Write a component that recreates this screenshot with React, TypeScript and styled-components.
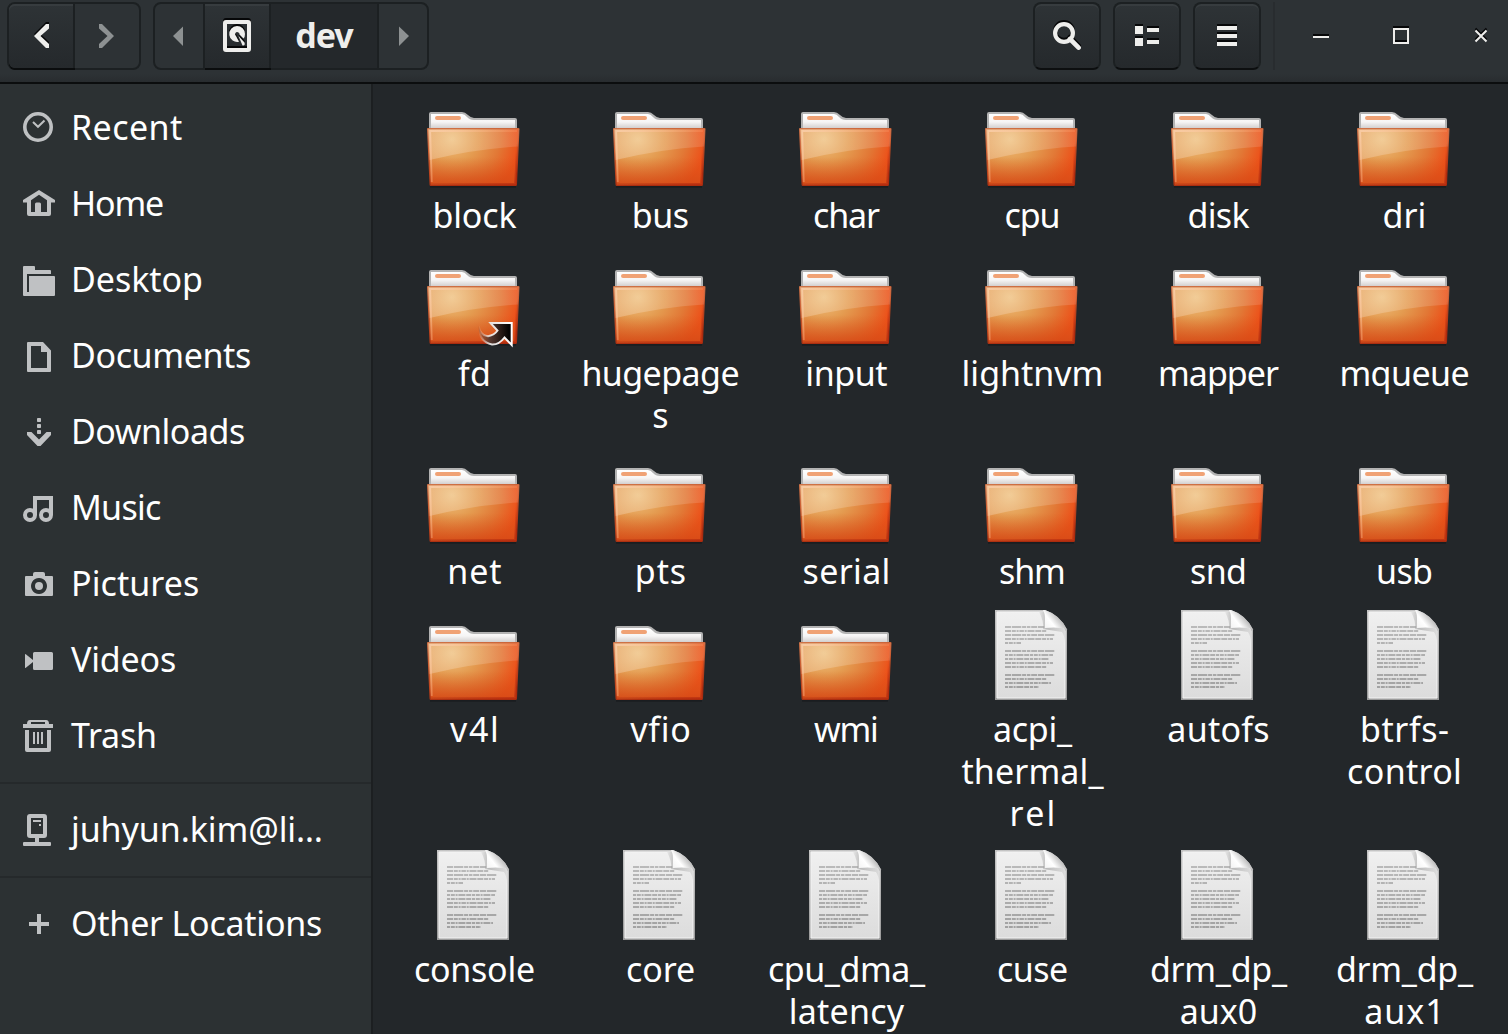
import React, { useLayoutEffect, useRef, useState } from "react";
import styled, { createGlobalStyle, css } from "styled-components";

const GlobalStyle = createGlobalStyle`
  *, *::before, *::after { box-sizing: border-box; }
  body {
    margin: 0;
    overflow: hidden;
    background: #23272a;
    font-family: "Noto Sans", "Open Sans", sans-serif;
  }
`;

const Window = styled.div`
  display: flex;
  flex-direction: column;
  width: 1508px;
  height: 1034px;
  overflow: hidden;
  color: #fff;
`;

/* ---------- header bar ---------- */

const HeaderBar = styled.header`
  display: flex;
  align-items: flex-start;
  flex: none;
  height: 84px;
  padding: 2px 3px 0 7px;
  border-bottom: 2px solid #0b0d0e;
  background: linear-gradient(#2d3235 0, #2d3235 74px, #282c2f 82px);
`;

const ButtonGroup = styled.div`
  display: flex;
  height: 68px;
  margin-right: 12px;
  border: 2px solid #1c2022;
  border-radius: 8px;
  background: #2d3235;
`;

const raised = css`
  background: linear-gradient(#2e3336, #25292c);
  box-shadow: inset 0 2px 0 #373c3f, 0 2px 0 #0b0d0e;
`;

const Segment = styled.button<{ $width: number; $raised?: boolean; $current?: boolean }>`
  display: flex;
  align-items: center;
  justify-content: center;
  box-sizing: content-box;
  width: ${(p) => p.$width}px;
  height: 64px;
  padding: 0;
  border: 0;
  border-right: 2px solid #1c2022;
  background: ${(p) => (p.$current ? "#24282b" : "transparent")};
  color: #eeeeec;
  font: bold 34px "Noto Sans", "Open Sans", sans-serif;
  ${(p) => p.$raised && raised}
  &:first-child { border-radius: 6px 0 0 6px; }
  &:last-child { border-right: 0; border-radius: 0 6px 6px 0; }
`;

const ToolButton = styled.button`
  display: flex;
  align-items: center;
  justify-content: center;
  width: 68px;
  height: 68px;
  margin-right: 12px;
  padding: 0;
  border: 2px solid #1c2022;
  border-bottom-color: #0d0f10;
  border-radius: 8px;
  background: linear-gradient(#2e3336, #25292c) padding-box;
  box-shadow: inset 0 2px 0 #373c3f;
`;

const Spacer = styled.div`
  flex: 1;
`;

const Divider = styled.div`
  width: 2px;
  height: 68px;
  background: #282c2f;
`;

const WindowControls = styled.div`
  display: flex;
  gap: 32px;
  margin-left: 22px;
`;

const ControlButton = styled.button`
  display: flex;
  align-items: center;
  justify-content: center;
  width: 48px;
  height: 68px;
  padding: 0;
  border: 0;
  background: none;
`;

const Glyph = styled.svg<{ $embossed?: boolean; $size?: number }>`
  display: block;
  flex: none;
  width: ${(p) => p.$size ?? 32}px;
  height: ${(p) => p.$size ?? 32}px;
  overflow: visible;
  color: ${(p) => (p.$embossed ? "#eeeeec" : "#8d9192")};
  fill: currentColor;
  ${(p) => p.$embossed && "filter: drop-shadow(0 -2px 0 #060708);"}
`;

/* ---------- body ---------- */

const Body = styled.div`
  display: flex;
  flex: 1;
  min-height: 0;
`;

const Sidebar = styled.nav`
  flex: none;
  width: 373px;
  padding-top: 6px;
  border-right: 2px solid #1c1f21;
  background: #2c3133;
`;

const Place = styled.a`
  display: flex;
  align-items: center;
  height: 76px;
  padding-left: 23px;
`;

const PlaceIcon = styled.svg`
  display: block;
  flex: none;
  width: 32px;
  height: 32px;
  margin-right: 16px;
  fill: #bfc1c3;
`;

const Rule = styled.hr`
  height: 2px;
  margin: 8px 0;
  border: 0;
  background: #25292b;
`;

const Text = styled.span<{ $bold?: boolean }>`
  display: block;
  white-space: pre;
  font-size: 34px;
  font-weight: ${(p) => (p.$bold ? 700 : 400)};
  line-height: 42px;
  ${Place} & { margin-bottom: 2px; }
  ${Segment} & { padding: 0 0 2px 1px; }
`;

const Files = styled.main`
  display: grid;
  flex: 1;
  grid-template-columns: repeat(6, 186px);
  grid-template-rows: 158px 198px 158px 240px 240px;
  padding: 8px 0 0 7px;
  overflow: hidden;
  background: #23272a;
`;

const Entry = styled.div`
  display: flex;
  flex-direction: column;
  align-items: center;
`;

const EntryIcon = styled.svg`
  display: block;
  flex: none;
  width: 96px;
  height: 96px;
  overflow: visible;
`;

const EntryName = styled.div`
  display: flex;
  flex-direction: column;
  align-items: center;
  padding: 6px 0 0 3px;
`;

/* A line of text whose tracking is adjusted so that its ink spans `width`. */
function Tracked({ text, width, bold }: { text: string; width: number; bold?: boolean }) {
  const ref = useRef<HTMLSpanElement>(null);
  const [spacing, setSpacing] = useState(0);
  useLayoutEffect(() => {
    const ctx = document.createElement("canvas").getContext("2d");
    if (!ctx || !ref.current || text.length < 2) return;
    const s = getComputedStyle(ref.current);
    ctx.font = `${s.fontWeight} ${s.fontSize} ${s.fontFamily}`;
    const m = ctx.measureText(text);
    const ink = m.actualBoundingBoxLeft + m.actualBoundingBoxRight;
    setSpacing((width - ink) / (text.length - 1));
  }, [text, width]);
  return (
    <Text ref={ref} $bold={bold} style={{ letterSpacing: spacing, marginRight: -spacing }}>
      {text}
    </Text>
  );
}

/* ---------- artwork ---------- */

const Sprite = styled.svg`
  position: absolute;
  width: 0;
  height: 0;
`;

function Defs() {
  return (
    <Sprite aria-hidden>
      <symbol id="folder" viewBox="0 0 96 96" overflow="visible">
        <path d="M5 94.800H91" stroke="#121517" strokeWidth="2" opacity=".5" />
        <path d="M4 38V22q0-2 2-2H37q3 0 6 3t6 3H90q2 0 2 2V38Z" fill="#b3b3b3" />
        <path d="M6 38V22H37q2.500 0 5 3t7 3H90V38Z" fill="url(#paper)" />
        <rect x="10" y="24" width="26" height="4" rx="2" fill="#f0a275" />
        <path d="M3 36H93.500q1 0 1 1L92 92.500q0 1.500-1.500 1.500H6q-1.500 0-1.500-1.500L2 37q0-1 1-1Z" fill="url(#border)" />
        <path d="M3.500 37.500H93L90.500 92.500H6L3.500 37.500Z" fill="url(#front)" />
        <path d="M3.500 37.500H93L90.500 92.500H6L3.500 37.500Z" fill="url(#lower)" />
        <path d="M3 37H93.800L93 54.500Q50 57 4.600 68Z" fill="url(#gloss)" />
        <path d="M6.800 90L5.200 39H92" fill="none" stroke="url(#rim)" strokeWidth="1.800" />
        <path d="M90.300 91L92 52" stroke="url(#side)" strokeWidth="2" />
        <path d="M6 92.300H91" stroke="url(#base)" strokeWidth="2" />
      </symbol>
      <symbol id="file" viewBox="0 -2 96 96" overflow="visible">
        <path d="M12 2H62Q77 7 84 21.500V92H12Z" fill="url(#edge)" />
        <path d="M14 4H62Q75 9 82 23V90H14Z" fill="url(#sheet)" stroke="#f4f4f4" strokeWidth="1" />
        <g stroke="url(#ink)" strokeWidth="2" fill="none">
          <path d="M22 19.010L62 19M22 27.010L72 27M22 43.010L72 43M22 67.010L72 67" strokeDasharray="6 .8 9.500 .8 4 .8 3.500 .8 6 .8" />
          <path d="M22 23.010L64 23M22 31.010L70 31M22 55.010L70 55M22 59.010L64 59M22 71.010L64 71" strokeDasharray="6 .8 4 .8 2 .8 4.500 .8 2 .8 7 .8" />
          <path d="M22 35.010L38 35M22 47.010L70 47M22 51.010L66 51M22 75.010L68 75M22 79.010L56 79" strokeDasharray="3 .8 4 .8 2 .8 7 .8 5 .8" />
        </g>
        <path d="M56 4Q61 13 60 21L79 24Q82 28 82 36V22L62 4Z" fill="url(#foldShade)" />
        <path d="M62 20V11Q62 5 60 2H62Q77 7 84 21.500Q76 18.500 62 20Z" fill="url(#fold)" />
      </symbol>
      <linearGradient id="paper" x1="0" y1="0" x2="0" y2="1">
        <stop offset="0" stopColor="#fff" />
        <stop offset=".5" stopColor="#f6f5f5" />
        <stop offset="1" stopColor="#c8c4c3" />
      </linearGradient>
      <linearGradient id="border" x1="0" y1="0" x2=".3" y2="1">
        <stop offset="0" stopColor="#cf7448" />
        <stop offset=".5" stopColor="#c9562a" />
        <stop offset="1" stopColor="#a92c0e" />
      </linearGradient>
      <radialGradient id="front" gradientUnits="userSpaceOnUse" cx="27" cy="47" r="74" gradientTransform="translate(0 4) scale(1 .92)">
        <stop offset="0" stopColor="#eebf7c" />
        <stop offset=".35" stopColor="#e49b50" />
        <stop offset=".65" stopColor="#e27735" />
        <stop offset=".92" stopColor="#ed4f18" />
      </radialGradient>
      <linearGradient id="lower" x1="0" y1="0" x2="0" y2="1">
        <stop offset=".5" stopColor="#d85a1c" stopOpacity="0" />
        <stop offset="1" stopColor="#d54b17" stopOpacity=".85" />
      </linearGradient>
      <linearGradient id="gloss" x1="0" y1="0" x2="1" y2="0">
        <stop offset="0" stopColor="#fff" stopOpacity=".24" />
        <stop offset="1" stopColor="#fff" stopOpacity=".12" />
      </linearGradient>
      <linearGradient id="rim" gradientUnits="userSpaceOnUse" x1="5" y1="39" x2="60" y2="95">
        <stop offset="0" stopColor="#ffd6b8" stopOpacity=".65" />
        <stop offset="1" stopColor="#ff9c62" stopOpacity=".1" />
      </linearGradient>
      <linearGradient id="side" gradientUnits="userSpaceOnUse" x1="0" y1="50" x2="0" y2="92">
        <stop offset="0" stopColor="#c23112" stopOpacity="0" />
        <stop offset="1" stopColor="#b22a0f" stopOpacity=".8" />
      </linearGradient>
      <linearGradient id="base" gradientUnits="userSpaceOnUse" x1="6" y1="0" x2="91" y2="0">
        <stop offset="0" stopColor="#b22f10" stopOpacity=".35" />
        <stop offset="1" stopColor="#b22a0f" stopOpacity=".85" />
      </linearGradient>
      <linearGradient id="edge" x1="0" y1="0" x2="0" y2="1">
        <stop offset="0" stopColor="#c4c4c4" />
        <stop offset="1" stopColor="#9b9b9b" />
      </linearGradient>
      <linearGradient id="sheet" x1="0" y1="0" x2="0" y2="1">
        <stop offset="0" stopColor="#f0f0f0" />
        <stop offset="1" stopColor="#dcdcdc" />
      </linearGradient>
      <linearGradient id="ink" gradientUnits="userSpaceOnUse" x1="0" y1="18" x2="0" y2="80">
        <stop offset="0" stopColor="#bababa" />
        <stop offset="1" stopColor="#a2a2a2" />
      </linearGradient>
      <linearGradient id="fold" gradientUnits="userSpaceOnUse" x1="62" y1="19" x2="76" y2="8">
        <stop offset="0" stopColor="#f4f4f4" />
        <stop offset=".45" stopColor="#fff" />
        <stop offset="1" stopColor="#b4b4b4" />
      </linearGradient>
      <linearGradient id="foldShade" x1="0" y1="0" x2="1" y2="0">
        <stop offset="0" stopColor="#999" stopOpacity=".1" />
        <stop offset=".3" stopColor="#999" stopOpacity=".6" />
        <stop offset="1" stopColor="#bbb" stopOpacity=".35" />
      </linearGradient>
      <linearGradient id="arrow" x1="0" y1="0" x2="1" y2="0">
        <stop offset="0" stopColor="#7a4a38" stopOpacity=".3" />
        <stop offset=".35" stopColor="#55382f" />
        <stop offset=".9" stopColor="#060404" />
      </linearGradient>
      <linearGradient id="arrowLine" x1="0" y1="0" x2="1" y2="0">
        <stop offset="0" stopColor="#fff" stopOpacity="0" />
        <stop offset=".35" stopColor="#eee" stopOpacity=".9" />
        <stop offset="1" stopColor="#fff" />
      </linearGradient>
    </Sprite>
  );
}

function LinkEmblem() {
  return (
    <path
      d="M53.500 76Q55.500 85.500 63 86.300Q69.500 85 72.500 80.500L65.500 73H86.700V95L79.500 87.500Q74 94.800 67 94.500Q54 92 53.500 76Z"
      fill="url(#arrow)"
      stroke="url(#arrowLine)"
      strokeWidth="2"
    />
  );
}

const placeArt: Record<string, React.ReactNode> = {
  recent: (
    <g fill="none" stroke="#bfc1c3">
      <circle cx="15" cy="15" r="13.200" strokeWidth="3.600" />
      <path d="M10 10L15 14.800L21.500 8.500" strokeWidth="2" />
    </g>
  ),
  home: (
    <path
      fillRule="evenodd"
      d="M16 2L32 12V14.500H28V26q0 2-2 2H6q-2 0-2-2V14.500H0V12ZM16 6.800L8 12.200V24H12V16q0-1.500 1.500-1.500h3q1.500 0 1.500 1.500V24H24V12.200Z"
    />
  ),
  desktop: <path d="M1 2H11q1 0 1 1V6H27q1 0 1 1V10H4V28H6V12H31q1 0 1 1V31q0 1-1 1H1q-1 0-1-1V3q0-1 1-1Z" />,
  documents: <path fillRule="evenodd" d="M5 2H20L28 10.500V31q0 1-1 1H5q-1 0-1-1V3q0-1 1-1ZM8 6V28H24V12H18V6Z" />,
  downloads: (
    <>
      <path d="M4 16H8.500L16 23.500L23.500 16H28V19L17.500 30H14.500L4 19Z" />
      <rect x="14" y="2" width="4" height="4" rx=".8" />
      <rect x="14" y="8" width="4" height="4" rx=".8" />
      <rect x="14" y="14" width="4" height="4" rx=".8" />
    </>
  ),
  music: (
    <>
      <path d="M10 4H30V23H26V8H14V23H10Z" />
      <circle cx="7" cy="23" r="5" fill="none" stroke="#bfc1c3" strokeWidth="4" />
      <circle cx="23" cy="23" r="5" fill="none" stroke="#bfc1c3" strokeWidth="4" />
    </>
  ),
  pictures: (
    <>
      <path
        fillRule="evenodd"
        d="M10 8V6q0-2 2-2h8q2 0 2 2V8h7q1 0 1 1V27q0 1-1 1H3q-1 0-1-1V9q0-1 1-1ZM16 10a8 8 0 1 0 .01 0Z"
      />
      <circle cx="16" cy="18" r="4" />
    </>
  ),
  videos: <path d="M2.500 10L10 16V9.500q0-1.500 1.500-1.500h17q1.500 0 1.500 1.500v15q0 1.500-1.500 1.500h-17q-1.500 0-1.500-1.500V18L2.500 24q-.5 0-.5-.5v-13q0-.5.5-.5Z" />,
  trash: (
    <path
      fillRule="evenodd"
      d="M7 0H23q3 0 3 4h4V8H0V4H4Q4 0 7 0ZM8 2V4H22V2ZM2 10H6V28H24V10H28V30q0 2-2 2H4q-2 0-2-2ZM10 12h2V24h-2ZM14 12h2V24h-2ZM18 12h2V24h-2Z"
    />
  ),
  server: (
    <path
      fillRule="evenodd"
      d="M7 0H21q3 0 3 3V21q0 3-3 3H16V28H27q1 0 1 1v2q0 1-1 1H1q-1 0-1-1V29q0-1 1-1H12V24H7q-3 0-3-3V3q0-3 3-3ZM8 4V20H20V4ZM10 6h8V8h-8ZM16 10h2v2h-2Z"
    />
  ),
  plus: <path d="M14 6h4v8h8v4h-8v8h-4v-8H6v-4h8Z" />,
};

type PlaceItem = { icon: string; text: string; width: number };

const places: PlaceItem[][] = [
  [
    { icon: "recent", text: "Recent", width: 108 },
    { icon: "home", text: "Home", width: 89 },
    { icon: "desktop", text: "Desktop", width: 128 },
    { icon: "documents", text: "Documents", width: 176 },
    { icon: "downloads", text: "Downloads", width: 170 },
    { icon: "music", text: "Music", width: 87 },
    { icon: "pictures", text: "Pictures", width: 124 },
    { icon: "videos", text: "Videos", width: 104 },
    { icon: "trash", text: "Trash", width: 84 },
  ],
  [{ icon: "server", text: "juhyun.kim@li…", width: 252 }],
  [{ icon: "plus", text: "Other Locations", width: 248 }],
];

type Line = [string, number];
type FileItem = { kind: "folder" | "link" | "file"; lines: Line[] };

const dir = (...lines: Line[]): FileItem => ({ kind: "folder", lines });
const file = (...lines: Line[]): FileItem => ({ kind: "file", lines });

const files: FileItem[] = [
  dir(["block", 82]),
  dir(["bus", 54]),
  dir(["char", 66]),
  dir(["cpu", 53]),
  dir(["disk", 61]),
  dir(["dri", 41]),
  { kind: "link", lines: [["fd", 31]] },
  dir(["hugepage", 155], ["s", 13]),
  dir(["input", 80]),
  dir(["lightnvm", 138]),
  dir(["mapper", 119]),
  dir(["mqueue", 127]),
  dir(["net", 52]),
  dir(["pts", 48]),
  dir(["serial", 84]),
  dir(["shm", 64]),
  dir(["snd", 54]),
  dir(["usb", 54]),
  dir(["v4l", 46]),
  dir(["vfio", 59]),
  dir(["wmi", 63]),
  file(["acpi_", 79], ["thermal_", 143], ["rel", 41]),
  file(["autofs", 100]),
  file(["btrfs-", 86], ["control", 111]),
  file(["console", 119]),
  file(["core", 67]),
  file(["cpu_dma_", 157], ["latency", 114]),
  file(["cuse", 69]),
  file(["drm_dp_", 137], ["aux0", 75]),
  file(["drm_dp_", 137], ["aux1", 73]),
];

export default function App() {
  return (
    <Window>
      <GlobalStyle />
      <Defs />
      <HeaderBar>
        <ButtonGroup>
          <Segment $width={64} $raised aria-label="Back">
            <Glyph $embossed viewBox="0 0 32 32">
              <path d="M9 16L21 4H24V8.500L15.500 16L24 24V28H21Z" />
            </Glyph>
          </Segment>
          <Segment $width={64} aria-label="Forward">
            <Glyph viewBox="0 0 32 32">
              <path d="M8 4H11L23 16L11 28H8V24L16.500 16L8 8.500Z" />
            </Glyph>
          </Segment>
        </ButtonGroup>
        <ButtonGroup>
          <Segment $width={48} aria-label="Scroll path left">
            <Glyph viewBox="0 0 32 32">
              <path d="M10 16L20 6.500V26Z" />
            </Glyph>
          </Segment>
          <Segment $width={64} $raised aria-label="Root">
            <Glyph $embossed viewBox="0 0 32 32">
              <path
                fillRule="evenodd"
                d="M5 0H27q3 0 3 3V29q0 3-3 3H5q-3 0-3-3V3q0-3 3-3ZM6 4V28H26V4ZM16 6A8 8 0 0 1 24 14Q24 17 22.500 18.500L18.500 14.500A2.200 2.200 0 1 0 15 16L18 21.800A8 8 0 1 1 16 6ZM17.500 16L23.500 22.500Q24.500 26 21.500 25.500Z"
              />
            </Glyph>
          </Segment>
          <Segment $width={106} $current>
            <Tracked text="dev" width={58} bold />
          </Segment>
          <Segment $width={48} aria-label="Scroll path right">
            <Glyph viewBox="0 0 32 32">
              <path d="M12 6.500L22 16L12 26Z" />
            </Glyph>
          </Segment>
        </ButtonGroup>
        <Spacer />
        <ToolButton aria-label="Search">
          <Glyph $embossed viewBox="0 0 32 32">
            <circle cx="13" cy="13" r="8.900" fill="none" stroke="currentColor" strokeWidth="4.200" />
            <path d="M19 19L27.600 27.600" stroke="currentColor" strokeWidth="4.600" strokeLinecap="round" />
          </Glyph>
        </ToolButton>
        <ToolButton aria-label="View">
          <Glyph $embossed viewBox="0 0 32 32">
            <path d="M4 6h8v8H4ZM4 18h8v8H4ZM16 8h12v4H16ZM16 20h12v4H16Z" />
          </Glyph>
        </ToolButton>
        <ToolButton aria-label="Menu">
          <Glyph $embossed viewBox="0 0 32 32">
            <path d="M6 6h20v4H6ZM6 14h20v4H6ZM6 22h20v4H6Z" />
          </Glyph>
        </ToolButton>
        <Divider />
        <WindowControls>
          <ControlButton aria-label="Minimize">
            <Glyph $embossed $size={16} viewBox="0 0 16 16">
              <path d="M0 8h16v2H0Z" />
            </Glyph>
          </ControlButton>
          <ControlButton aria-label="Maximize">
            <Glyph $embossed $size={16} viewBox="0 0 16 16">
              <path fillRule="evenodd" d="M0 0h16v16H0ZM2 2v12h12V2Z" />
            </Glyph>
          </ControlButton>
          <ControlButton aria-label="Close">
            <Glyph $embossed $size={16} viewBox="0 0 16 16">
              <path d="M2.500 2.500L13.500 13.500M13.500 2.500L2.500 13.500" stroke="currentColor" strokeWidth="2" />
            </Glyph>
          </ControlButton>
        </WindowControls>
      </HeaderBar>
      <Body>
        <Sidebar>
          {places.map((group, i) => (
            <React.Fragment key={i}>
              {i > 0 && <Rule />}
              {group.map((p) => (
                <Place key={p.text}>
                  <PlaceIcon viewBox="0 0 32 32">{placeArt[p.icon]}</PlaceIcon>
                  <Tracked text={p.text} width={p.width} />
                </Place>
              ))}
            </React.Fragment>
          ))}
        </Sidebar>
        <Files>
          {files.map((f, i) => (
            <Entry key={i}>
              <EntryIcon viewBox="0 0 96 96">
                <use href={f.kind === "file" ? "#file" : "#folder"} width="96" height="96" />
                {f.kind === "link" && <LinkEmblem />}
              </EntryIcon>
              <EntryName>
                {f.lines.map(([text, width]) => (
                  <Tracked key={text} text={text} width={width} />
                ))}
              </EntryName>
            </Entry>
          ))}
        </Files>
      </Body>
    </Window>
  );
}
